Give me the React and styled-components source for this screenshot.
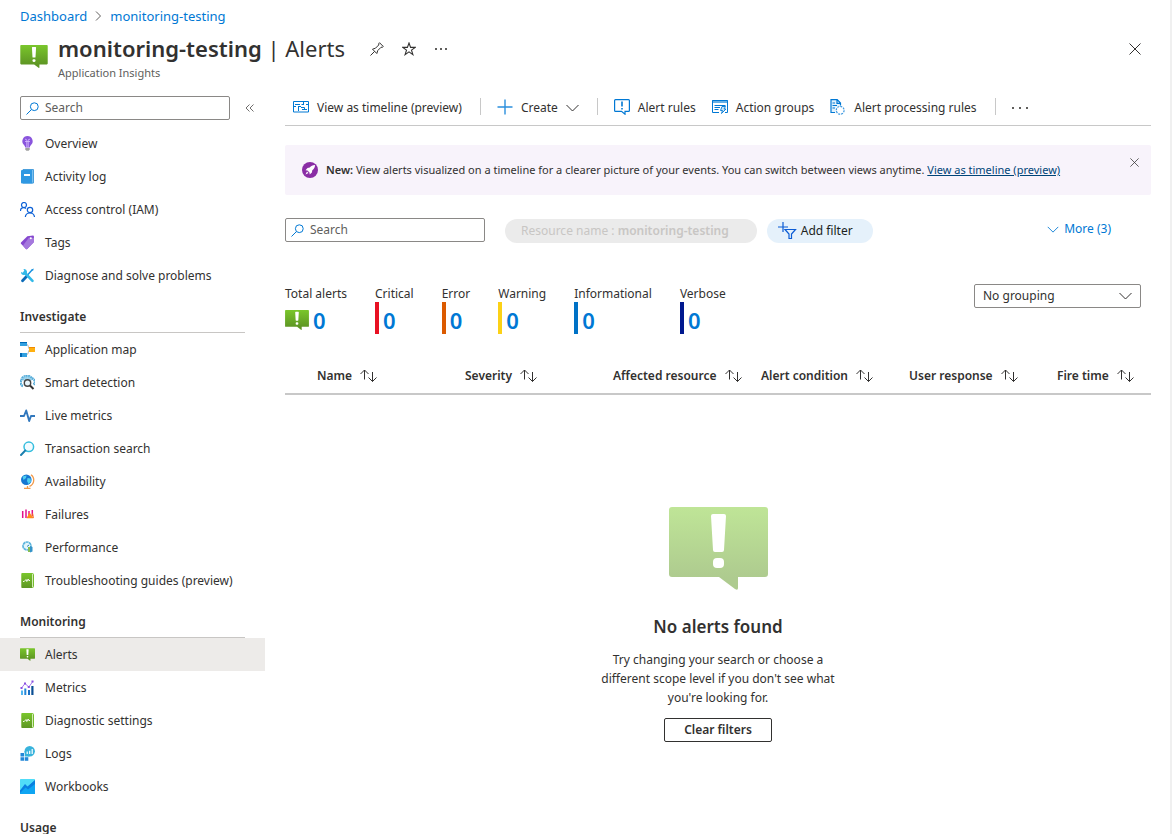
import React from "react";
import styled, { createGlobalStyle } from "styled-components";

const Global = createGlobalStyle`
  * { box-sizing: border-box; }
  body {
    margin: 0;
    background: #fff;
    color: #323130;
    font-family: "Noto Sans", "Open Sans", sans-serif;
    font-size: 12px;
    line-height: 18px;
  }
  button, input, select { font: inherit; color: inherit; }
  svg { display: block; flex: none; }
`;

const Page = styled.div`
  height: 100vh;
  overflow: hidden;
  display: flex;
  flex-direction: column;
  border-right: 2px solid #f0f0f0;
`;

const Breadcrumb = styled.nav`
  display: flex;
  align-items: center;
  gap: 8px;
  height: 32px;
  padding: 0 20px;
  font-size: 13px;
`;

const CrumbLink = styled.a`
  color: #0078d4;
  text-decoration: none;
`;

const Header = styled.header`
  display: flex;
  align-items: flex-start;
  height: 64px;
  padding: 0 25px 0 20px;
`;

const HeaderIcon = styled.div`
  width: 38px;
  padding-top: 13px;
`;

const Titles = styled.div`
  display: flex;
  flex-direction: column;
`;

const TitleRow = styled.div`
  display: flex;
  align-items: center;
  height: 34px;
`;

const Title = styled.h1`
  margin: 0 16px 2px 0;
  font-size: 22px;
  line-height: 32px;
  font-weight: 400;
  white-space: nowrap;
`;

const Strong = styled.strong`
  font-weight: 600;
`;

const Subtitle = styled.div`
  color: #605e5c;
  font-size: 11px;
  line-height: 14px;
`;

const IconButton = styled.button`
  display: grid;
  place-items: center;
  width: ${(p) => p.$size || 32}px;
  height: ${(p) => p.$size || 32}px;
  padding: 0;
  border: 0;
  background: transparent;
  color: #323130;
`;

const HeaderClose = styled.div`
  margin-left: auto;
  height: 34px;
  display: flex;
  align-items: center;
`;

const Body = styled.div`
  flex: 1;
  min-height: 0;
  display: flex;
`;

const Sidebar = styled.aside`
  flex: none;
  width: 265px;
`;

const SidebarTop = styled.div`
  display: flex;
  align-items: center;
  gap: 7px;
  padding-left: 20px;
  margin-bottom: 7px;
`;

const SearchField = styled.label`
  display: flex;
  align-items: center;
  gap: 6px;
  width: ${(p) => p.$width}px;
  height: 24px;
  padding: 0 5px;
  border: 1px solid #8a8886;
  border-radius: 2px;
`;

const SearchInput = styled.input`
  flex: 1;
  min-width: 0;
  padding: 0;
  border: 0;
  outline: 0;
  background: transparent;
  &::placeholder { color: #605e5c; opacity: 1; }
`;

const NavList = styled.ul`
  list-style: none;
  margin: 0;
  padding: 0;
`;

const NavLink = styled.a`
  display: flex;
  align-items: center;
  gap: 10px;
  height: 33px;
  padding: 0 20px;
  color: inherit;
  text-decoration: none;
  white-space: nowrap;
  background: ${(p) => (p.$active ? "#edebe9" : "transparent")};
`;

const NavHeading = styled.h2`
  margin: 0 20px;
  height: 41px;
  padding-top: 16px;
  border-bottom: 1px solid #c8c6c4;
  font-size: 12px;
  line-height: 18px;
  font-weight: 600;
`;

const Main = styled.main`
  flex: 1;
  min-width: 0;
  padding: 0 19px 0 20px;
`;

const Toolbar = styled.div`
  display: flex;
  align-items: center;
  height: 30px;
  padding: 0 0 6px 8px;
  border-bottom: 1px solid #c8c8c8;
`;

const Command = styled.button`
  display: flex;
  align-items: center;
  gap: 8px;
  height: 24px;
  padding: 0;
  margin-right: 16px;
  border: 0;
  background: transparent;
  white-space: nowrap;
  & > svg:first-child { margin-bottom: 2px; }
`;

const Divider = styled.span`
  width: 1px;
  height: 17px;
  margin: 0 16px 2px 2px;
  background: #c8c8c8;
`;

const Banner = styled.section`
  display: flex;
  align-items: center;
  gap: 8px;
  height: 50px;
  margin-top: 19px;
  padding: 0 7px 0 17px;
  border-radius: 2px;
  background: #f8f3fb;
  font-size: 11px;
`;

const BannerText = styled.p`
  flex: 1;
  margin: 0;
  white-space: nowrap;
`;

const BannerLink = styled.a`
  color: #004578;
`;

const BannerClose = styled.div`
  align-self: flex-start;
  padding-top: 7px;
`;

const Filters = styled.div`
  display: flex;
  align-items: flex-start;
  gap: 10px;
  height: 25px;
  margin-top: 23px;
  padding-right: 40px;
`;

const Pill = styled.button`
  display: flex;
  align-items: center;
  align-self: flex-end;
  gap: 4px;
  height: 24px;
  padding: ${(p) => (p.$muted ? "0 28px 0 16px" : "0 20px 0 11px")};
  margin: ${(p) => (p.$muted ? "0 0 0 10px" : "0")};
  border: 0;
  border-radius: 12px;
  background: ${(p) => (p.$muted ? "#ebebeb" : "#e5f1fb")};
  color: ${(p) => (p.$muted ? "#c8c6c4" : "#201f1e")};
  white-space: nowrap;
`;

const MoreButton = styled.button`
  display: flex;
  align-items: center;
  gap: 5px;
  height: 22px;
  margin-left: auto;
  padding: 0;
  border: 0;
  background: transparent;
  color: #0078d4;
`;

const Summary = styled.div`
  display: flex;
  justify-content: space-between;
  align-items: flex-start;
  margin-top: 41px;
  padding-right: 10px;
`;

const Stats = styled.div`
  display: flex;
  gap: 28px;
  padding-top: 2px;
`;

const Stat = styled.div`
  display: flex;
  flex-direction: column;
`;

const StatLabel = styled.span`
  line-height: 16px;
`;

const StatValue = styled.a`
  display: flex;
  align-items: center;
  gap: ${(p) => (p.$color ? 0 : 4)}px;
  height: 32px;
  padding: 3px 0 0 ${(p) => (p.$color ? 4 : 0)}px;
  border-left: ${(p) => (p.$color ? `4px solid ${p.$color}` : "0")};
  color: #0078d4;
  font-size: 22px;
  line-height: 28px;
  font-weight: 600;
  text-decoration: none;
`;

const SelectBox = styled.div`
  display: grid;
  grid-template-columns: 1fr 32px;
  align-items: center;
  width: 167px;
  height: 24px;
`;

const Select = styled.select`
  grid-area: 1 / 1 / 2 / 3;
  appearance: none;
  width: 100%;
  height: 24px;
  padding: 0 8px;
  border: 1px solid #8a8886;
  border-radius: 2px;
  background: #fff;
  line-height: 18px;
`;

const SelectArrow = styled.span`
  grid-area: 1 / 2 / 2 / 3;
  justify-self: center;
  pointer-events: none;
`;

const Table = styled.table`
  width: 100%;
  margin-top: 24px;
  table-layout: fixed;
  border-collapse: collapse;
`;

const HeadCell = styled.th`
  width: ${(p) => (p.$width ? `${p.$width}px` : "auto")};
  height: 36px;
  padding: 0;
  border-bottom: 2px solid #c8c8c8;
  text-align: left;
`;

const SortButton = styled.button`
  display: flex;
  align-items: center;
  gap: 8px;
  padding: 0;
  border: 0;
  background: transparent;
  font-weight: 600;
  white-space: nowrap;
`;

const Empty = styled.section`
  display: flex;
  flex-direction: column;
  align-items: center;
  padding-top: 112px;
  text-align: center;
`;

const EmptyTitle = styled.h2`
  margin: 25px 0 11px;
  font-size: 17px;
  line-height: 24px;
  font-weight: 600;
`;

const EmptyText = styled.p`
  width: 250px;
  margin: 0 0 11px;
  line-height: 19px;
`;

const ClearButton = styled.button`
  height: 24px;
  padding: 0 19px;
  border: 1px solid #323130;
  border-radius: 2px;
  background: #fff;
  font-weight: 600;
  line-height: 18px;
`;

function Svg({ w = 15, h = w, box = `0 0 ${w} ${h}`, children }) {
  return (
    <svg width={w} height={h} viewBox={box} fill="none" aria-hidden="true">
      {children}
    </svg>
  );
}

function Bubble({ id, w, h, from = "#7ac62c", to = "#5e9624" }) {
  return (
    <Svg w={w} h={h} box="0 0 99 83">
      <defs>
        <linearGradient id={id} x1="0" y1="0" x2="0" y2="1">
          <stop offset="0" stopColor={from} />
          <stop offset=".85" stopColor={to} />
        </linearGradient>
      </defs>
      <path fill={`url(#${id})`} d="M3 0H96Q99 0 99 3V67Q99 70 96 70H69V81Q69 84 66 82L50 70H3Q0 70 0 67V3Q0 0 3 0Z" />
      <path fill="#fff" d="M44 7H55Q57 7 57 9L55 43Q55 45 53 45H46Q44 45 44 43L42 9Q42 7 44 7Z" />
      <rect x="44" y="51" width="11" height="10" rx="4" fill="#fff" />
    </Svg>
  );
}

const Close = ({ size }) => (
  <Svg w={size} box="0 0 12 12">
    <path d="M.5.5l11 11M11.5.5l-11 11" stroke="#323130" />
  </Svg>
);

const Chevron = ({ w = 13, h = 8 }) => (
  <Svg w={w} h={h} box="0 0 13 8">
    <path d="M.5 1l6 6 6-6" stroke="currentColor" />
  </Svg>
);

const Dots = ({ w = 12 }) => (
  <Svg w={w} h={2}>
    <path d={`M0 0h2v2H0zM${w / 2 - 1} 0h2v2h-2zM${w - 2} 0h2v2h-2z`} fill="#605e5c" />
  </Svg>
);

const Magnifier = () => (
  <Svg w={13}>
    <circle cx="8.3" cy="4.7" r="3.9" stroke="#0078d4" />
    <path d="M5.5 7.5L.5 12.5" stroke="#0078d4" />
  </Svg>
);

const SortArrows = () => (
  <Svg w={17} h={13}>
    <path d="M4.500 10.500V1M.5 5l4-4 4 4M12.500 3v9.500M8.500 8.500l4 4 4-4" stroke="#323130" />
  </Svg>
);

const GreenBook = ({ id }) => (
  <Svg>
    <defs>
      <linearGradient id={id} x1="0" y1="0" x2="0" y2="1">
        <stop stopColor="#7ac62c" />
        <stop offset="1" stopColor="#5e9624" />
      </linearGradient>
    </defs>
    <rect x="2" y=".5" width="11.5" height="14" rx="1" fill="#d4ecba" stroke="#76bc2d" />
    <path d="M1.500 0H12v15H1.500z" fill={`url(#${id})`} />
    <path d="M3 8.500h1.200L6 6.500l.8 2 1.400-2.500.6 1.500H10" stroke="#fff" strokeWidth=".9" />
  </Svg>
);

const icons = {
  overview: (
    <Svg>
      <path d="M7.500 0a5.200 5.200 0 0 1 3.700 8.800c-.9 1-1.200 1.700-1.400 2.700H5.200C5 10.500 4.700 9.800 3.800 8.800A5.200 5.200 0 0 1 7.500 0z" fill="#8a55dd" />
      <path d="M5 3.500c1.500-1 1.800.7 1.800 1.700V11M10 3.500c-1.500-1-1.800.7-1.800 1.700V11M5 5.500h5" stroke="#d9c0ff" strokeWidth=".8" />
      <path d="M5.300 12h4.400v1.500l-1 1.200H6.300l-1-1.200z" fill="#a0a0a0" />
    </Svg>
  ),
  activity: (
    <Svg>
      <path d="M3 .5h10.500v13.500H3z" fill="#cde8fa" stroke="#4a9fdc" />
      <path d="M2 1h10.500v13.500H2a1 1 0 0 1-1-1V2a1 1 0 0 1 1-1z" fill="#2f98e2" />
      <path d="M4 5h6v2H4z" fill="#fff" />
    </Svg>
  ),
  access: (
    <Svg>
      <circle cx="4" cy="3" r="2.500" stroke="#0f62d6" strokeWidth="1.200" />
      <circle cx="10" cy="8" r="2.700" stroke="#0f62d6" strokeWidth="1.200" />
      <path d="M.5 9c0-2 1.300-3.300 3.200-3.300 1 0 1.700.3 2.300.8M5.300 15c.3-2.500 2-4 4.500-4s4.400 1.500 4.700 4" stroke="#0f62d6" strokeWidth="1.200" />
    </Svg>
  ),
  tags: (
    <Svg>
      <path d="M7.300 1.200L13 .5q.8 0 .9.800L14 7 7.200 14q-.7.6-1.300 0L1 8.700q-.5-.7 0-1.300z" fill="#8648cf" />
      <path d="M9 2.500L14 3v4l-6.800 7q-.7.6-1.300 0L3 10.500z" fill="#a578dd" />
      <circle cx="10.800" cy="3.200" r="1" fill="#fff" />
    </Svg>
  ),
  diagnose: (
    <Svg>
      <path d="M12.500 1.500l-5 5.500" stroke="#1490df" strokeWidth="1.400" />
      <path d="M7.200 7.800l-4.700 4.900" stroke="#0b6bb8" strokeWidth="2.800" strokeLinecap="round" />
      <path d="M4.500 4.500l8 8.300" stroke="#32b9e8" strokeWidth="2.600" strokeLinecap="round" />
      <path d="M3.500 1a3 3 0 1 1-2.500 3l2 .7L4.300 3z" fill="#32b9e8" />
      <path d="M11.500 1.500L13.800.5l-.8 2.500z" fill="#1490df" />
    </Svg>
  ),
  map: (
    <Svg>
      <path d="M6 2c3 0 2 5 4 5.500C8 8 9 13 6 13" stroke="#b0b0b0" />
      <path d="M0 0h7v4H0zM0 11h7v4H0z" fill="#32a0e0" />
      <path d="M0 0h7v1H0zM0 11h2v4H0z" fill="#0068b5" />
      <path d="M9 5h6v5H9z" fill="#ffb010" />
      <path d="M9 5h6v1H9z" fill="#f08a00" />
    </Svg>
  ),
  smart: (
    <Svg>
      <path d="M3 11a3.300 3.300 0 0 1-1.500-5.500A4.500 4.500 0 0 1 6 1.200a5 5 0 0 1 6 2.300A3.300 3.300 0 0 1 13.500 9.500" stroke="#55acd9" strokeWidth="2.400" strokeDasharray="1.800 .4" />
      <path d="M3 4.500h9M4 2.500h6.500" stroke="#83c8e8" strokeWidth="1.800" strokeDasharray="1.600 .5" />
      <circle cx="7.500" cy="8" r="3.200" fill="#e8f5fc" stroke="#444" strokeWidth="1.400" />
      <path d="M10 10.500l3.500 3.500" stroke="#333" strokeWidth="2" />
    </Svg>
  ),
  live: (
    <Svg>
      <path d="M0 8h4l2.200-5.500 3 10.500 1.800-5h4" stroke="#3278bd" strokeWidth="1.900" strokeLinejoin="round" />
    </Svg>
  ),
  search: (
    <Svg>
      <circle cx="8.800" cy="5.800" r="4.800" fill="#f2fbff" stroke="#35bede" strokeWidth="1.500" />
      <path d="M5.300 9.500L1 14" stroke="#1b7fae" strokeWidth="1.900" strokeLinecap="round" />
    </Svg>
  ),
  availability: (
    <Svg>
      <path d="M11 .8a6.600 6.600 0 0 1-1.500 11.500M7.500 12v2.500M4 14.300h6.500" stroke="#f29a4a" strokeWidth="1.300" />
      <circle cx="6.300" cy="5.800" r="5.300" fill="#1677d2" />
      <path d="M2.500 2.500l4-1-.5 2.500L3.500 6zM7.500 4l3 .5.5 3-2.500 2.500-1.500-3z" fill="#4fd0ef" />
    </Svg>
  ),
  failures: (
    <Svg>
      <path d="M2.700 4v7M6 2.500V11M9 4v4M12.300 3v6" stroke="#e3108c" strokeWidth="1.500" />
      <path d="M9.500 5.500l4 5.800h-7z" fill="#ff8c1a" />
      <path d="M12.500 6.500l.8 4.500" stroke="#f56b20" strokeWidth="1.200" />
    </Svg>
  ),
  performance: (
    <Svg>
      <circle cx="7" cy="6" r="4" fill="#e3f4fb" stroke="#5cb4dc" strokeWidth="1.700" strokeDasharray="3 .4" />
      <path d="M7 6.500l2-1.500" stroke="#2b89b8" />
      <path d="M8 7h2.300v5H8z" fill="#86bd54" />
      <path d="M10 6l2.500 1v4.500L10 12.500z" fill="#3493c8" />
    </Svg>
  ),
  guides: <GreenBook id="book-guides" />,
  alerts: <Bubble id="bubble-nav" w={15} h={13} />,
  metrics: (
    <Svg>
      <path d="M1 10.500h2V15H1z" fill="#50b5f0" />
      <path d="M4.300 8.500h2V15h-2z" fill="#2587d8" />
      <path d="M8 10h2v5H8z" fill="#1a70c5" />
      <path d="M11.300 6h2.200v9h-2.200z" fill="#0b4f94" />
      <path d="M1.500 8l3.500-4.500L8.800 7l4-5.500" stroke="#a67af0" />
      <path d="M.5 7h2v2h-2zM4 2.500h2v2H4zM7.800 6h2v2h-2zM11.500.5h2v2h-2z" fill="#8b52e0" />
    </Svg>
  ),
  settings: <GreenBook id="book-settings" />,
  logs: (
    <Svg>
      <path d="M.5 7H4v3.500H.5zM.5 11.200H4v3.600H.5z" fill="#2488d8" />
      <circle cx="9.700" cy="5.200" r="5.200" fill="#38b3dc" />
      <path d="M4.700 5v5.500h5z" fill="#38b3dc" />
      <path d="M4.700 11.200h3.600v3.600H4.700z" fill="#2488d8" />
      <path d="M7.200 8V5.500M9.700 8V4.800M12.200 8V3" stroke="#fff" strokeWidth="1.200" />
    </Svg>
  ),
  workbooks: (
    <Svg>
      <rect width="15" height="15" rx=".6" fill="#50dcf8" />
      <path d="M0 12l5-6 2.500 2L15 1.500V15H0z" fill="#0fa5f2" />
      <path d="M0 11.500L5 5l2.500 2.500L15 1v4L8 10.500 5.500 8.500 0 14z" fill="#0a7fe0" />
    </Svg>
  ),
};

const nav = [
  {
    items: [
      ["overview", "Overview"],
      ["activity", "Activity log"],
      ["access", "Access control (IAM)"],
      ["tags", "Tags"],
      ["diagnose", "Diagnose and solve problems"],
    ],
  },
  {
    title: "Investigate",
    items: [
      ["map", "Application map"],
      ["smart", "Smart detection"],
      ["live", "Live metrics"],
      ["search", "Transaction search"],
      ["availability", "Availability"],
      ["failures", "Failures"],
      ["performance", "Performance"],
      ["guides", "Troubleshooting guides (preview)"],
    ],
  },
  {
    title: "Monitoring",
    items: [
      ["alerts", "Alerts"],
      ["metrics", "Metrics"],
      ["settings", "Diagnostic settings"],
      ["logs", "Logs"],
      ["workbooks", "Workbooks"],
    ],
  },
  { title: "Usage", items: [] },
];

const stats = [
  ["Critical", "#e81123"],
  ["Error", "#db5a00"],
  ["Warning", "#fcd116"],
  ["Informational", "#0072c6"],
  ["Verbose", "#00188f"],
];

const columns = [
  ["Name", 148],
  ["Severity", 148],
  ["Affected resource", 148],
  ["Alert condition", 148],
  ["User response", 148],
  ["Fire time"],
];

export default function App() {
  return (
    <Page>
      <Global />
      <Breadcrumb aria-label="Breadcrumb">
        <CrumbLink href="#dashboard">Dashboard</CrumbLink>
        <Svg w={7} h={10}>
          <path d="M1 .5L5.500 5 1 9.500" stroke="#605e5c" />
        </Svg>
        <CrumbLink href="#monitoring-testing">monitoring-testing</CrumbLink>
      </Breadcrumb>

      <Header>
        <HeaderIcon>
          <Bubble id="bubble-header" w={28} h={23} />
        </HeaderIcon>
        <Titles>
          <TitleRow>
            <Title>
              <Strong>monitoring-testing</Strong> | Alerts
            </Title>
            <IconButton aria-label="Pin">
              <Svg w={14}>
                <path d="M.5 13.500l4.200-4.200M2.500 7.200l4.300 4.300 1-3 3.200-3.200 1.700-.2.600-.6L9.500.700l-.6.600-.2 1.700-3.200 3.200z" stroke="#323130" strokeLinejoin="round" />
              </Svg>
            </IconButton>
            <IconButton aria-label="Favorite">
              <Svg w={14}>
                <path d="M7 1l1.600 4.400h4.600L9.500 8.100l1.400 4.500L7 9.900l-3.900 2.700 1.400-4.500L.8 5.400h4.600z" stroke="#323130" strokeWidth="1.100" />
              </Svg>
            </IconButton>
            <IconButton aria-label="More actions">
              <Dots w={12} />
            </IconButton>
          </TitleRow>
          <Subtitle>Application Insights</Subtitle>
        </Titles>
        <HeaderClose>
          <IconButton $size={20} aria-label="Close">
            <Close size={12} />
          </IconButton>
        </HeaderClose>
      </Header>

      <Body>
        <Sidebar>
          <SidebarTop>
            <SearchField $width={210}>
              <Magnifier />
              <SearchInput type="text" placeholder="Search" aria-label="Search menu" />
            </SearchField>
            <IconButton $size={24} aria-label="Collapse menu">
              <Svg w={9} h={8}>
                <path d="M4.500.5L1 4l3.500 3.500M8.500.5L5 4l3.500 3.500" stroke="#605e5c" strokeWidth=".9" />
              </Svg>
            </IconButton>
          </SidebarTop>
          <nav aria-label="Resource menu">
            {nav.map((group) => (
              <React.Fragment key={group.title || "top"}>
                {group.title && <NavHeading>{group.title}</NavHeading>}
                <NavList>
                  {group.items.map(([key, label]) => (
                    <li key={key}>
                      <NavLink href={`#${key}`} $active={key === "alerts"}>
                        {icons[key]}
                        {label}
                      </NavLink>
                    </li>
                  ))}
                </NavList>
              </React.Fragment>
            ))}
          </nav>
        </Sidebar>

        <Main>
          <Toolbar role="toolbar" aria-label="Alert commands">
            <Command>
              <Svg w={16} h={12}>
                <path d="M.5.500h15v10.500H.5z" stroke="#0078d4" />
                <path d="M2 3.500h5M5.500 5v5M5.500 5.500H8M10.500 1v3M8.500 3.500H11M13 3.500h2M8 6.500h3.500M11.500 6.500v2M9 8.500h5M1 5.500h2" stroke="#0078d4" />
              </Svg>
              View as timeline (preview)
            </Command>
            <Divider />
            <Command>
              <Svg w={16}>
                <path d="M8 .5v15M.5 8h15" stroke="#2b8fdd" strokeWidth="1.400" />
              </Svg>
              Create
              <Chevron />
            </Command>
            <Divider />
            <Command>
              <Svg w={16}>
                <path d="M1.500.6h13q.9 0 .9.900v10q0 .9-.9.900H11v2.800L7.500 12.400h-6q-.9 0-.9-.9v-10q0-.9.900-.9z" stroke="#0078d4" strokeWidth="1.200" />
                <path d="M8 2.500v5M8 9v1.500" stroke="#0078d4" strokeWidth="1.600" />
              </Svg>
              Alert rules
            </Command>
            <Command>
              <Svg w={16} h={14}>
                <path d="M0 0h16v3H0z" fill="#66b0e5" />
                <path d="M7 12.500H.5V.5h15v12H13M2.500 5.500h11M2.500 7.500H8M2.500 9.500h4" stroke="#0078d4" />
                <path d="M10 6.500h3.500L12 9h2l-4.500 4.500 1-3H8.500z" fill="#cbe6f8" stroke="#0078d4" strokeWidth=".9" />
              </Svg>
              Action groups
            </Command>
            <Command>
              <Svg w={16}>
                <path d="M1 .6h6l3.400 3.500V6L5.500 9v5H1z" fill="#e3f2fc" />
                <path d="M5 13.500H1V.6h6.200l3.300 3.500v2.400M7 .6v3.700h3.500M2.500 4h2.500M2.500 6.500H7M2.500 9H5" stroke="#0078d4" strokeWidth="1.200" />
                <circle cx="10.200" cy="11.300" r="3.900" stroke="#3c98e0" strokeWidth="1.200" strokeDasharray="2 1" />
              </Svg>
              Alert processing rules
            </Command>
            <Divider />
            <IconButton $size={16} aria-label="More commands">
              <Dots w={16} />
            </IconButton>
          </Toolbar>

          <Banner>
            <Svg w={16}>
              <circle cx="8" cy="8" r="8" fill="#8a2da5" />
              <path d="M13 3c-2.500 0-4 1-5.300 2.600L5.500 6 3.500 8.200l2 .2 2 2 .2 2 2.200-2 .4-2.200C12 7 13 5.500 13 3zM5 9.500l-1.500 3L6.500 11z" fill="#fff" />
            </Svg>
            <BannerText>
              <Strong>New:</Strong> View alerts visualized on a timeline for a clearer picture of your events. You can switch between views anytime.{" "}
              <BannerLink href="#timeline">View as timeline (preview)</BannerLink>
            </BannerText>
            <BannerClose>
              <IconButton $size={20} aria-label="Dismiss">
                <Close size={9} />
              </IconButton>
            </BannerClose>
          </Banner>

          <Filters>
            <SearchField $width={200}>
              <Magnifier />
              <SearchInput type="text" placeholder="Search" aria-label="Search alerts" />
            </SearchField>
            <Pill $muted>
              <span>
                Resource name : <Strong>monitoring-testing</Strong>
              </span>
            </Pill>
            <Pill>
              <Svg w={19} h={18}>
                <path d="M5 0v10M0 5h10" stroke="#0b5cd5" strokeWidth="1.200" />
                <path d="M7 7.500h10.500L13.500 12v4.500h-2.500V12z" fill="#e5f1fb" stroke="#0b5cd5" strokeWidth="1.200" />
              </Svg>
              Add filter
            </Pill>
            <MoreButton>
              <Chevron w={12} h={7} />
              More (3)
            </MoreButton>
          </Filters>

          <Summary>
            <Stats>
              <Stat>
                <StatLabel>Total alerts</StatLabel>
                <StatValue href="#total">
                  <Bubble id="bubble-total" w={24} h={20} />0
                </StatValue>
              </Stat>
              {stats.map(([label, color]) => (
                <Stat key={label}>
                  <StatLabel>{label}</StatLabel>
                  <StatValue href={`#${label}`} $color={color}>
                    0
                  </StatValue>
                </Stat>
              ))}
            </Stats>
            <SelectBox>
              <Select aria-label="Grouping">
                <option>No grouping</option>
              </Select>
              <SelectArrow>
                <Chevron />
              </SelectArrow>
            </SelectBox>
          </Summary>

          <Table>
            <thead>
              <tr>
                <HeadCell as="td" $width={32} />
                {columns.map(([label, width]) => (
                  <HeadCell key={label} scope="col" $width={width}>
                    <SortButton>
                      {label}
                      <SortArrows />
                    </SortButton>
                  </HeadCell>
                ))}
              </tr>
            </thead>
          </Table>

          <Empty>
            <Bubble id="bubble-empty" w={99} h={83} from="#bfe597" to="#aecb8f" />
            <EmptyTitle>No alerts found</EmptyTitle>
            <EmptyText>Try changing your search or choose a different scope level if you don't see what you're looking for.</EmptyText>
            <ClearButton>Clear filters</ClearButton>
          </Empty>
        </Main>
      </Body>
    </Page>
  );
}
